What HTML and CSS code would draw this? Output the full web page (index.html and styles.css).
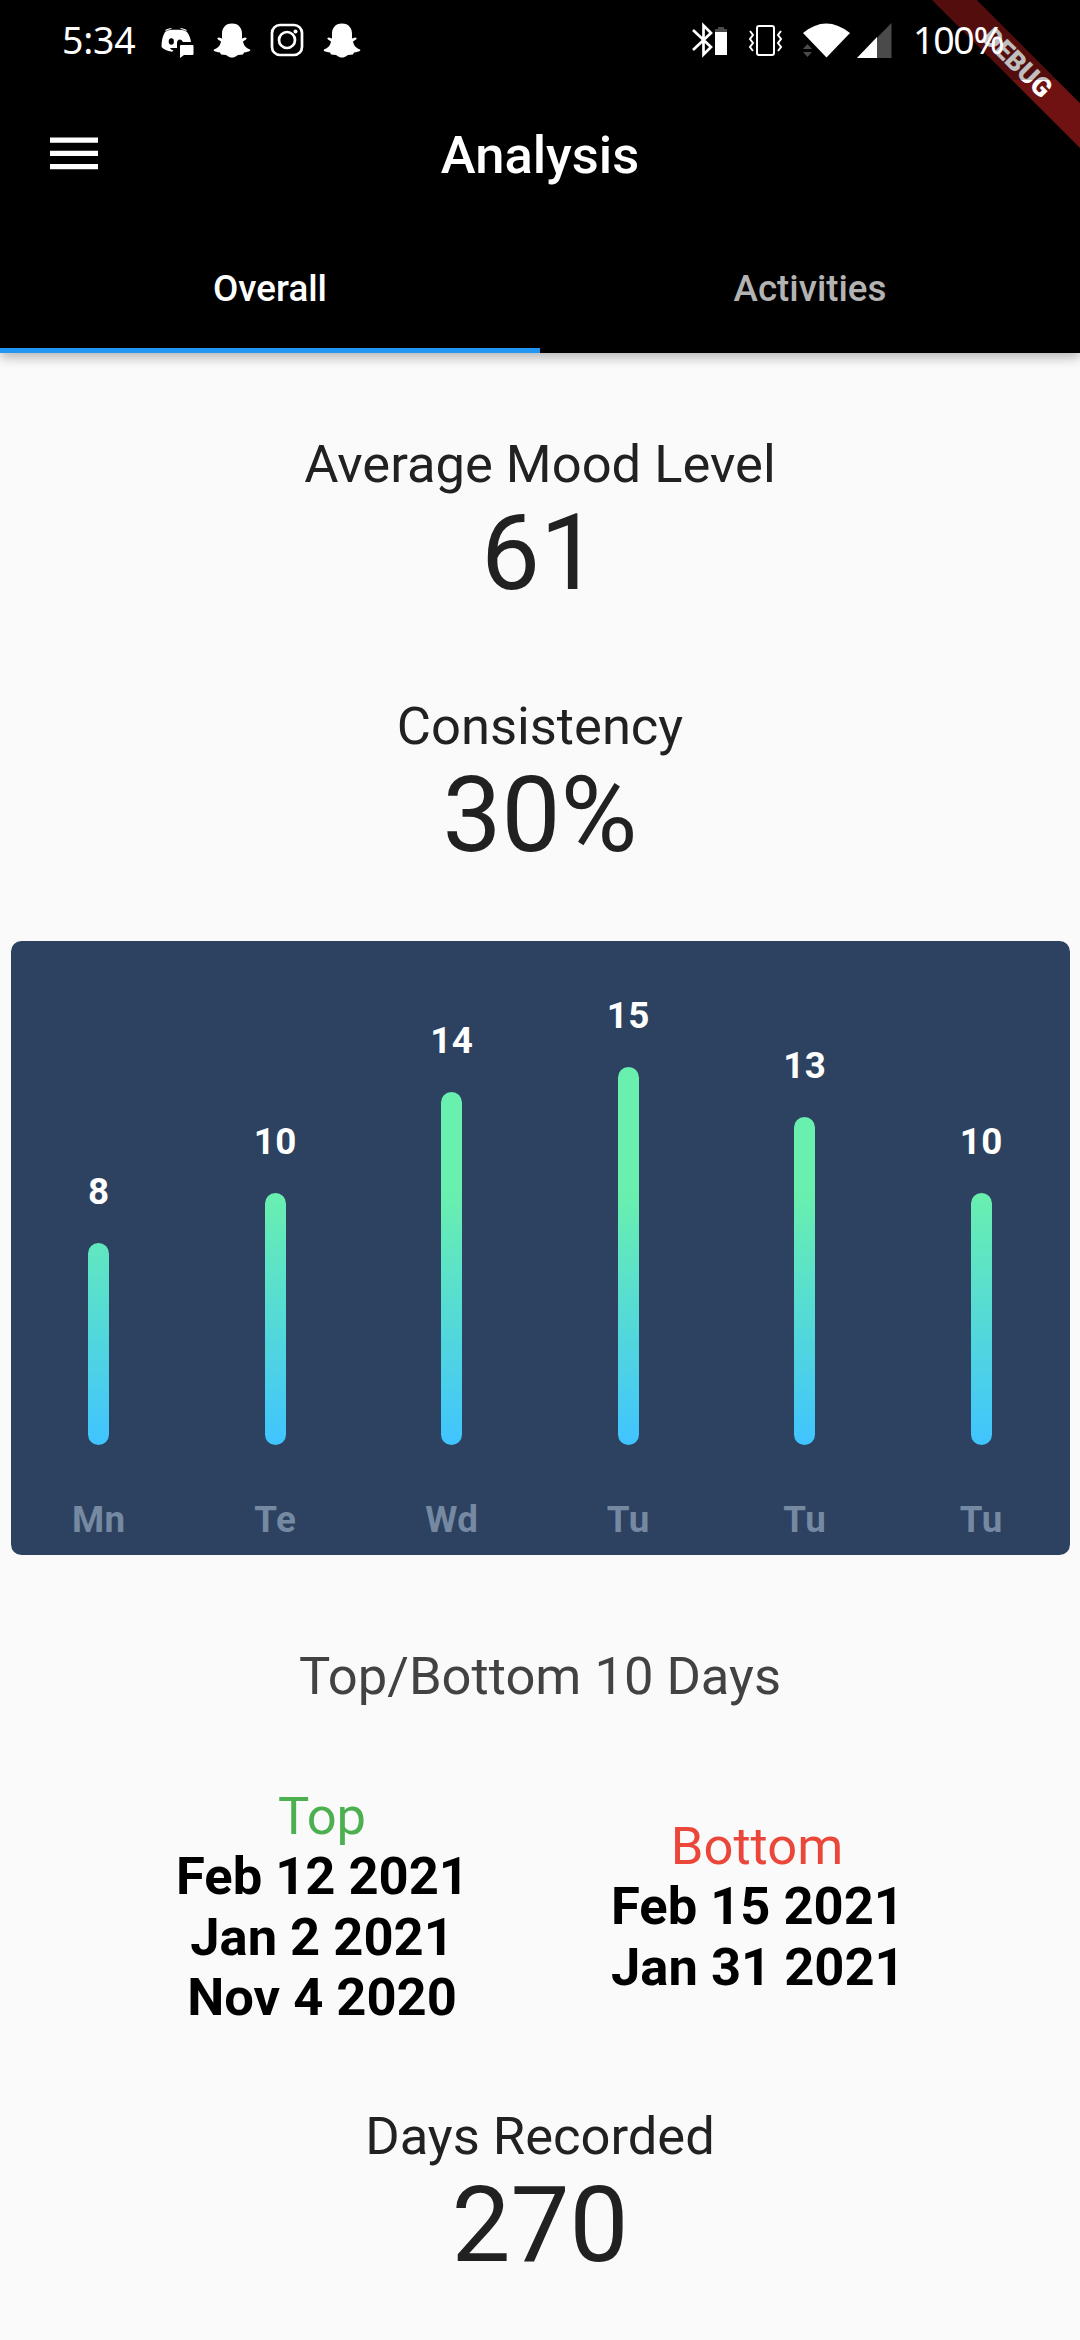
FILE: index.html
```html
<!DOCTYPE html>
<html lang="en">
<head>
<meta charset="utf-8">
<title>Analysis</title>
<link rel="stylesheet" href="styles.css">
</head>
<body>
<header class="header">
  <div class="status">
    <span class="clock">5:34</span>
    <svg class="notifications" viewBox="155 0 210 80">
      <path class="fill" d="M165 32c2-1.500 5-2.200 8-2.200h6c3 0 6 .700 8 2.200c2.500 3 3.500 7 4 10h-8c-2-4-6-3-6 1v5h-7c1 1.500 2 2 3.500 2.500l-1.500 1.200c-5-.700-8-2.200-10.500-4.700c0-6 1-11 3.500-15z"/>
      <path class="ear" d="M165.500 30.500q2.500-1.500 6-2M186.500 30.500q-2.500-1.500-6-2"/>
      <ellipse cx="171.300" cy="41.500" rx="2.600" ry="3.200"/>
      <path class="fill" d="M180 46q0-1 1-1h11.500q1 0 1 1v8q0 1-1 1h-8.500l-4 3z"/>
      <path id="ghost" class="fill" d="M232 23.500c7 0 10 5 10 10v5l3-1c2 0 2 1 1 2l-3 2c1 5 4 7 7 8c1 1 0 2-6 3l-1 2l-5 .500c-3 2-4 2.500-6 2.500s-3-.500-6-2.500l-5-.500l-1-2c-6-1-7-2-6-3c3-1 6-3 7-8l-3-2c-1-1-1-2 1-2l3 1v-5c0-5 3-10 10-10z"/>
      <rect class="line" x="272" y="25" width="30" height="30" rx="8"/>
      <circle class="line" cx="287" cy="40" r="8"/>
      <circle class="fill" cx="295.500" cy="31.500" r="2"/>
      <use href="#ghost" x="110"/>
    </svg>
    <svg class="system" viewBox="690 0 205 80">
      <path class="line" d="M693 30l18 17l-7.500 7.500v-29l7.500 7.500l-18 17"/>
      <path class="dim" d="M715 32v-3h3v-2h6v2h3v3z"/><path class="fill" d="M715 32h12v23h-12z"/>
      <rect class="thin" x="757" y="26" width="17" height="29" rx="2"/>
      <path class="thin" d="M750 31l3 4l-3 4l3 4l-3 4l3 4M781 31l-3 4l3 4l-3 4l3 4l-3 4"/>
      <path class="dim" d="M803 49l4.500-5l4.500 5zM803 52l4.500 5l4.500-5z"/>
      <path class="fill" d="M803 33q23-19 47 0l-23.500 24.500z"/>
      <path class="dim" d="M857 58l34.500-35v35z"/><path class="fill" d="M857 58l20-21v21z"/>
    </svg>
    <span class="battery">100%</span>
  </div>
  <div class="appbar">
    <svg class="menu" viewBox="0 0 48 34"><path d="M0 .5h48v5.300H0zM0 13.700h48V19H0zM0 27h48v5.300H0z"/></svg>
    <h1 class="title">Analysis</h1>
  </div>
  <nav class="tabs"><a class="tab active">Overall</a><a class="tab">Activities</a></nav>
  <svg class="banner" viewBox="0 0 160 160">
    <path class="ribbon" d="M12 0h44.800L160 103.200V148z"/>
    <text class="debug" transform="translate(97.500 62.500) rotate(45)" text-anchor="middle" y="9.500">DEBUG</text>
    <rect class="scrim" width="160" height="80"/>
  </svg>
</header>
<main class="content">
  <section class="stat mood"><h2 class="label">Average Mood Level</h2><p class="number">61</p></section>
  <section class="stat"><h2 class="label">Consistency</h2><p class="number">30%</p></section>
  <section class="chart">
    <div class="column"><span class="value">8</span><i class="bar" style="height:201.600px"></i><span class="day">Mn</span></div>
    <div class="column"><span class="value">10</span><i class="bar" style="height:252px"></i><span class="day">Te</span></div>
    <div class="column"><span class="value">14</span><i class="bar" style="height:352.800px"></i><span class="day">Wd</span></div>
    <div class="column"><span class="value">15</span><i class="bar" style="height:378px"></i><span class="day">Tu</span></div>
    <div class="column"><span class="value">13</span><i class="bar" style="height:327.600px"></i><span class="day">Tu</span></div>
    <div class="column"><span class="value">10</span><i class="bar" style="height:252px"></i><span class="day">Tu</span></div>
  </section>
  <h2 class="label ranking">Top/Bottom 10 Days</h2>
  <section class="lists">
    <div class="list"><h3 class="label top">Top</h3><p>Feb 12 2021</p><p>Jan 2 2021</p><p>Nov 4 2020</p></div>
    <div class="list"><h3 class="label bottom">Bottom</h3><p>Feb 15 2021</p><p>Jan 31 2021</p></div>
  </section>
  <section class="stat"><h2 class="label">Days Recorded</h2><p class="number">270</p></section>
</main>
</body>
</html>
```
FILE: styles.css
```css
* { box-sizing: border-box; margin: 0; padding: 0; }
body { width: 1080px; height: 2340px; overflow: hidden; background: #fafafa; font-family: Roboto, sans-serif; color: #212121; }
.header { position: relative; z-index: 1; height: 353px; background: #000; color: #fff; box-shadow: 0 5px 10px rgba(0,0,0,.2), 0 2px 14px rgba(0,0,0,.1); }
.status { position: relative; z-index: 2; display: flex; height: 80px; align-items: center; padding-left: 62px; font: 400 37.500px/80px "Noto Sans", sans-serif; }
.clock { width: 93px; letter-spacing: -.2px; }
.notifications { width: 210px; height: 80px; }
.system { width: 205px; height: 80px; margin-left: 325px; }
.battery { margin-left: 18px; letter-spacing: -1.300px; }
.fill { fill: #fff; }
.dim { fill: #4a4a4a; }
.line, .thin, .ear { fill: none; stroke: #fff; stroke-width: 2.700; }
.thin { stroke-width: 2; }
.ear { stroke-width: 1.200; }
.appbar { display: flex; height: 147px; align-items: center; justify-content: center; position: relative; }
.menu { position: absolute; left: 49.500px; top: 57px; width: 48px; height: 34px; fill: #fff; }
.title { padding-top: 2px; font-size: 52.500px; line-height: 62px; font-weight: 500; }
.tabs { display: flex; height: 126px; }
.tab { flex: 1; height: 126px; line-height: 123px; text-align: center; font-size: 36.750px; font-weight: 500; color: #b3b3b3; border-bottom: 5.250px solid transparent; }
.active { color: #fff; border-color: #2196f3; }
.banner { position: absolute; top: 0; right: 0; width: 160px; height: 160px; z-index: 1; }
.ribbon { fill: #701212; }
.debug { fill: #fff; font: 900 26.800px Roboto, sans-serif; }
.scrim { fill: rgba(0,0,0,.25); }
.content { padding-top: 81px; text-align: center; }
.stat { height: 262.300px; }
.label { font-size: 52.500px; line-height: 61px; font-weight: 400; }
.number { font-size: 105px; line-height: 123px; margin-top: -3px; }
.chart { display: flex; height: 614px; margin: -17.600px 10.500px 0; background: #2c4260; border-radius: 10.500px; }
.column { flex: 1; display: flex; flex-direction: column; align-items: center; justify-content: flex-end; height: 614px; padding-bottom: 14px; font-size: 36.750px; line-height: 43px; font-weight: 700; letter-spacing: .4px; }
.value { color: #fff; margin-bottom: 30px; }
.bar { width: 21px; flex: none; border-radius: 10.500px; background: linear-gradient(to top, #40c4ff 0, #69f0ae 252px); }
.day { height: 43px; margin-top: 53px; color: #7589a2; }
.ranking { margin-top: 91px; color: #424242; }
.lists { display: flex; align-items: center; justify-content: space-between; height: 241px; margin: 79px 177px 0 176px; font-size: 52.500px; line-height: 60.250px; font-weight: 700; color: #000; }
.list { width: 292px; white-space: nowrap; }
.list .label { line-height: 60.250px; }
.list .top { color: #4caf50; }
.list .bottom { color: #ea4639; }
.lists + .stat { margin-top: 79px; }
```
